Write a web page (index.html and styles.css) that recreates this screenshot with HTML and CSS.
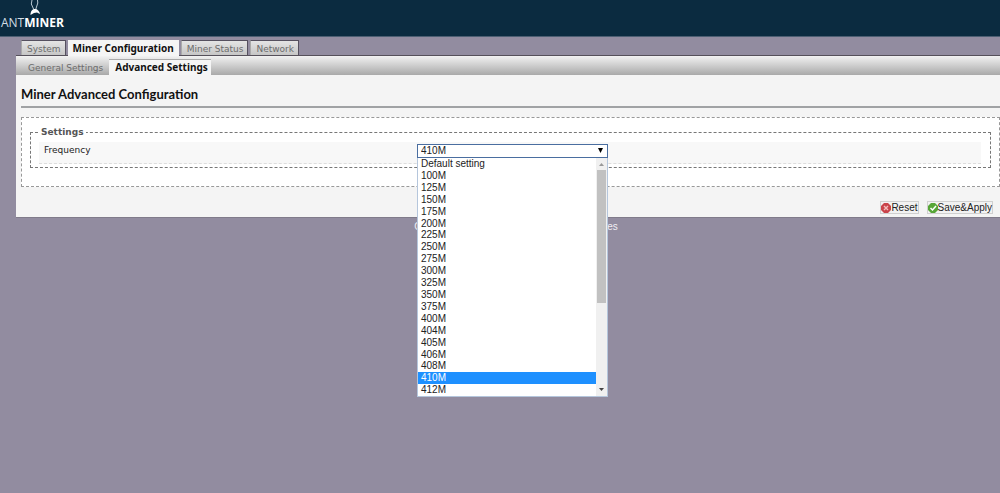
FILE: index.html
```html
<!DOCTYPE html>
<html lang="en">
<head>
<meta charset="utf-8">
<title>Miner Advanced Configuration</title>
<link rel="stylesheet" href="styles.css">
</head>
<body>
<header class="header">
  <a class="logo" href="#" aria-label="AntMiner">
    <svg class="ant" width="16" height="16" viewBox="0 0 16 16" aria-hidden="true">
      <path d="M5 0 4.300 4 7 10M10.500 0 10.800 3 8.500 10" fill="none" stroke="#b9c8d2" stroke-width="1"/>
      <path d="M3.500 15C3.500 11 5.500 9 8 9s4.500 2 5 5l-3-1.500-3 .5z" fill="#fff"/>
    </svg>
    <span class="wordmark">ANT<b>MINER</b></span>
  </a>
</header>
<div class="page">
  <nav class="tabs">
    <a class="tab" href="#">System</a>
    <a class="tab tab-active" href="#">Miner Configuration</a>
    <a class="tab" href="#">Miner Status</a>
    <a class="tab" href="#">Network</a>
  </nav>
  <main class="panel">
    <nav class="subtabs">
      <a class="subtab" href="#">General Settings</a>
      <a class="subtab subtab-active" href="#">Advanced Settings</a>
    </nav>
    <form class="form">
      <h1 class="title">Miner Advanced Configuration</h1>
      <div class="section">
        <fieldset class="settings">
          <legend>Settings</legend>
          <div class="row">
            <label for="frequency">Frequency</label>
            <div class="field">
              <select id="frequency" class="select">
                <option>410M</option>
              </select>
              <svg class="caret" width="5" height="5" viewBox="0 0 5 5" aria-hidden="true"><path d="M0 0h5L2.500 5z"/></svg>
              <div class="dropdown">
                <ul class="options" role="listbox" aria-label="Frequency">
                  <li role="option">Default setting</li>
                  <li role="option">100M</li>
                  <li role="option">125M</li>
                  <li role="option">150M</li>
                  <li role="option">175M</li>
                  <li role="option">200M</li>
                  <li role="option">225M</li>
                  <li role="option">250M</li>
                  <li role="option">275M</li>
                  <li role="option">300M</li>
                  <li role="option">325M</li>
                  <li role="option">350M</li>
                  <li role="option">375M</li>
                  <li role="option">400M</li>
                  <li role="option">404M</li>
                  <li role="option">405M</li>
                  <li role="option">406M</li>
                  <li role="option">408M</li>
                  <li role="option" class="chosen" aria-selected="true">410M</li>
                  <li role="option">412M</li>
                </ul>
                <div class="scrollbar" aria-hidden="true">
                  <svg class="arrow" width="5" height="3" viewBox="0 0 5 3"><path d="M0 3h5L2.500 0z" fill="#999"/></svg>
                  <div class="thumb"></div>
                  <svg class="arrow" width="5" height="3" viewBox="0 0 5 3"><path d="M0 0h5L2.500 3z" fill="#444"/></svg>
                </div>
              </div>
            </div>
          </div>
        </fieldset>
      </div>
      <div class="actions">
        <button type="reset" class="button">
          <svg width="10" height="10" viewBox="0 0 10 10" aria-hidden="true"><path d="M3 0h4l3 3v4l-3 3H3L0 7V3z" fill="#c9444b"/><path d="M3 3l4 4M7 3L3 7" stroke="#f3bcbc" stroke-width="1.400"/></svg>
          Reset
        </button>
        <button type="submit" class="button">
          <svg width="10" height="10" viewBox="0 0 10 10" aria-hidden="true"><path d="M3 0h4l3 3v4l-3 3H3L0 7V3z" fill="#57a637"/><path d="M2.500 5l2 2 3.500-4" fill="none" stroke="#fff" stroke-width="1.500"/></svg>
          Save&amp;Apply
        </button>
      </div>
    </form>
  </main>
</div>
<footer class="footer">Copyright © 2013-2014, Bitmain Technologies</footer>
</body>
</html>
```
FILE: styles.css
```css
* { box-sizing: border-box; }

body {
  min-height: 100vh;
  margin: 0;
  background: #928ca0;
  color: #222;
  font: 9px/12px "DejaVu Sans", Verdana, sans-serif;
}

a { color: inherit; text-decoration: none; }

.header {
  height: 37px;
  background: #0b2b40;
  border-bottom: 1px solid #4c5f73;
}

.logo {
  position: relative;
  display: inline-block;
  padding: 16px 0 0 1px;
  color: #fff;
}

.ant { position: absolute; left: 27px; top: 0; }

.wordmark { font: 12px/14px "Open Sans", sans-serif; color: #d3dee5; }
.wordmark b { color: #fff; }

.page { padding: 3px 0 0 16px; }

.tabs {
  display: flex;
  gap: 2px;
  padding-left: 5px;
}

.tab {
  height: 15px;
  padding: 2px 4px 0 5px;
  border: 1px solid #55505f;
  border-bottom: 0;
  border-left-color: #aaa;
  background: linear-gradient(#e4e4e4, #c6c6c6);
  color: #6c6c6c;
}

.tab-active {
  height: 16px;
  margin-bottom: -1px;
  padding: 1px 4px 0;
  background: #f5f5f5;
  border-color: #f5f5f5;
  color: #111;
  font: bold 10px/12px "Noto Sans", sans-serif;
  z-index: 1;
}

.panel {
  background: #f4f4f4;
  border-top: 1px solid #55505a;
  border-bottom: 1px solid #807b8a;
}

.subtabs {
  display: flex;
  height: 19px;
  padding: 3px 0 0 6px;
  background: linear-gradient(#f2f2f2, #a9a9a9);
}

.subtab { padding: 3px 5px 0 6px; color: #6c6c6c; }

.subtab-active {
  margin-left: 1px;
  background: #f5f5f5;
  border-top: 1px solid #aaa;
  padding: 1px 3px 0 6px;
  color: #111;
  font: bold 10px/12px "Noto Sans", sans-serif;
}

.form { padding-left: 5px; }

.title {
  margin: 0 0 9px;
  padding: 10px 0 3px;
  border-bottom: 2px solid #a0a2a4;
  color: #111;
  font: bold 13px/18px "Trebuchet MS", Lato, sans-serif;
}

.section {
  padding: 8px 8px 18px;
  border: 1px dashed #999;
  background: #fff;
}

.settings {
  margin: 0;
  padding: 4px 9px 3px 8px;
  border: 1px dashed #777;
}

.settings legend {
  padding: 0 3px;
  margin-left: -1px;
  color: #555;
  font-weight: bold;
}

.row {
  display: grid;
  grid-template-columns: 373px 1fr;
  height: 22px;
  padding: 2px 0 0 5px;
  border-bottom: 1px dashed #ddd;
  background: #f8f8f8;
}

.field {
  position: relative;
  width: 191px;
  height: 14px;
  font-family: "Liberation Sans", Arial, sans-serif;
}

.select {
  display: block;
  width: 100%;
  height: 14px;
  margin: 0;
  padding: 0 3px;
  appearance: none;
  border: 1px solid #4a6ea0;
  border-radius: 0;
  background: #fff;
  color: #222;
  font: 10px/12px "Liberation Sans", Arial, sans-serif;
}

.caret { position: absolute; right: 5px; top: 4px; }

.dropdown {
  position: absolute;
  top: 14px;
  left: 0;
  z-index: 2;
  display: flex;
  width: 100%;
  height: 239px;
  border: 1px solid #b5c6dc;
  border-top: 0;
  background: #fff;
}

.options {
  display: flex;
  flex: 1;
  flex-direction: column;
  margin: 0;
  padding: 0;
  list-style: none;
  font-size: 10px;
}

.options li { flex: 1 1 0; min-height: 0; padding-left: 3px; }

.chosen { background: #1e90ff; color: #fff; }

.scrollbar {
  display: flex;
  flex-direction: column;
  align-items: center;
  justify-content: space-between;
  width: 11px;
  padding: 5px 1px;
  background: #f0f0f0;
}

.arrow { flex: none; }

.thumb {
  width: 100%;
  height: 133px;
  margin: 4px 0 auto;
  background: #c1c1c1;
}

.actions {
  display: flex;
  justify-content: flex-end;
  gap: 8px;
  padding: 14px 7px 3px;
}

.button {
  display: flex;
  align-items: center;
  height: 13px;
  padding: 0;
  border: 1px solid #d0d0d0;
  background: #f2f2f2;
  color: #222;
  font: 10px/11px "Liberation Sans", Arial, sans-serif;
}

.footer {
  padding: 3px 0 0 32px;
  color: #f0eef4;
  font: 10px/12px "Liberation Sans", Arial, sans-serif;
  text-align: center;
}
```
